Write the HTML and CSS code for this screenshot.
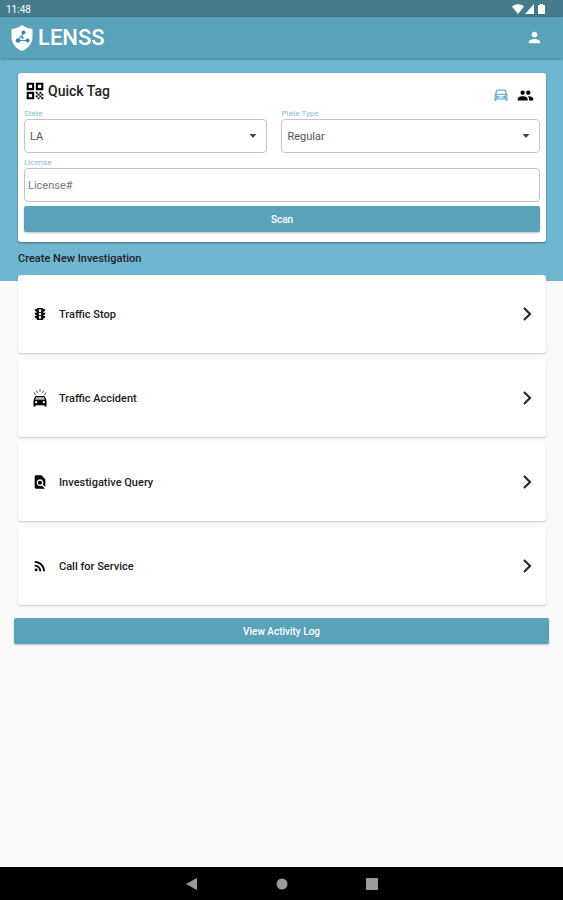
FILE: index.html
```html
<!DOCTYPE html>
<html lang="en">
<head>
  <meta charset="UTF-8" />
  <meta name="viewport" content="width=device-width, initial-scale=1.0" />
  <title>LENSS</title>
  <link rel="stylesheet" href="styles.css">
</head>
<body>
  <div class="status-bar">
    <span>11:48</span>
    <div class="status-icons">
      <svg width="12" height="10" viewBox="0 0 12 10"><path d="M0 2.5C3.500-.5 8.500-.5 12 2.500L6 10z" /></svg>
      <svg width="9" height="10" viewBox="0 0 9 10"><path d="M9 0v10H0z" /></svg>
      <svg class="battery" width="7" height="10" viewBox="0 0 7 10"><path d="M2 0h3v1h1.500l.5.5v8l-.5.5h-6L0 9.500v-8L.5 1H2z" /></svg>
    </div>
  </div>

  <header class="app-bar">
    <a class="brand" href="#">
      <svg width="22" height="26" viewBox="0 0 22 26">
        <path fill="#fff" d="M11 0c3 2.500 6.500 3.500 10.500 4v8c0 6.500-4.500 11.500-10.500 14C5 23.500.5 18.500.5 12V4C4.500 3.500 8 2.500 11 0z" />
        <path fill="none" stroke="#4a91ab" stroke-width="1.200" d="M12.500 8L7 15.500h9.500" />
        <g fill="#3c86a3">
          <circle cx="12.500" cy="7.500" r="2" />
          <circle cx="7" cy="15.500" r="2.300" />
          <circle cx="16.500" cy="15.500" r="2" />
          <circle cx="11.500" cy="12.500" r="1.200" />
        </g>
      </svg>
      <span>LENSS</span>
    </a>
    <button class="icon-button" type="button" aria-label="Profile">
      <svg width="17" height="17" viewBox="0 0 24 24"><path d="M12 12c2.210 0 4-1.790 4-4s-1.790-4-4-4-4 1.790-4 4 1.790 4 4 4zm0 2c-2.670 0-8 1.340-8 4v2h16v-2c0-2.660-5.330-4-8-4z" /></svg>
    </button>
  </header>

  <main>
    <section class="hero">
      <form class="quick-tag">
        <div class="quick-head">
          <h1>
            <svg width="20" height="20" viewBox="0 0 24 24"><path d="M2 11h9V2H2v9zm2.500-6.500h4v4h-4v-4zM2 22h9v-9H2v9zm2.500-6.500h4v4h-4v-4zM13 2v9h9V2h-9zm6.500 6.500h-4v-4h4v4zM19.500 19.500H22V22h-2.500zM13 13h2.200v2.200H13zM15.200 15.200h2.200v2.200h-2.200zM13 17.400h2.200v2.200H13zM15.200 19.700h2.200V22h-2.200zM17.400 17.400h2.200v2.200h-2.200zM17.400 13h2.200v2.200h-2.200zM19.600 15.200H22v2.200h-2.400z" /></svg>
            Quick Tag
          </h1>
          <div class="modes">
            <button class="icon-button active" type="button" aria-label="Vehicle">
              <svg width="14" height="14" viewBox="0 0 14 14"><path fill-rule="evenodd" d="M3 1.500h8c.5 0 .9.300 1 .8L13 6l.5.5v6c0 .3-.2.500-.5.500h-1c-.3 0-.5-.2-.5-.5v-1h-9v1c0 .3-.2.500-.5.500H1c-.3 0-.5-.2-.5-.5v-6L1 6l1-3.700c.1-.5.500-.8 1-.8zM3.300 2.800L2.500 5.700h9l-.8-2.900H3.300zM1.800 7v3.300h10.400V7H1.800z" /><path d="M2 7l3 1.500h4L12 7v3H9.500L9 9.300H5L4.500 10H2z" /></svg>
            </button>
            <button class="icon-button" type="button" aria-label="People">
              <svg width="17" height="17" viewBox="0 0 24 24"><path d="M16 11c1.660 0 2.990-1.340 2.990-3S17.660 5 16 5s-3 1.340-3 3 1.340 3 3 3zm-8 0c1.660 0 2.990-1.340 2.990-3S9.660 5 8 5 5 6.340 5 8s1.340 3 3 3zm0 2c-2.330 0-7 1.170-7 3.500V19h14v-2.500c0-2.330-4.670-3.500-7-3.500zm8 0c-.29 0-.62.02-.97.05 1.160.84 1.970 1.970 1.970 3.450V19h6v-2.500c0-2.330-4.670-3.500-7-3.500z" /></svg>
            </button>
          </div>
        </div>

        <div class="field-row">
          <div class="field">
            <label for="state">State</label>
            <div class="select-box">
              <select id="state">
                <option>LA</option>
              </select>
              <svg width="8" height="4" viewBox="0 0 8 4"><path d="M.5 0h7L4 4z" /></svg>
            </div>
          </div>
          <div class="field">
            <label for="plateType">Plate Type</label>
            <div class="select-box">
              <select id="plateType">
                <option>Regular</option>
              </select>
              <svg width="8" height="4" viewBox="0 0 8 4"><path d="M.5 0h7L4 4z" /></svg>
            </div>
          </div>
        </div>

        <div class="field">
          <label for="license">License</label>
          <input type="text" id="license" placeholder="License#" />
        </div>

        <button class="primary" type="submit">Scan</button>
      </form>

      <h2>Create New Investigation</h2>
    </section>

    <nav class="investigations">
      <a class="item" href="#">
        <svg width="16" height="16" viewBox="0 0 24 24"><path d="M20 10h-3V8.860c1.720-.45 3-2 3-3.860h-3V4c0-.55-.45-1-1-1H8c-.55 0-1 .45-1 1v1H4c0 1.860 1.280 3.410 3 3.860V10H4c0 1.860 1.280 3.410 3 3.860V15H4c0 1.860 1.280 3.410 3 3.860V20c0 .55.45 1 1 1h8c.55 0 1-.45 1-1v-1.140c1.720-.45 3-2 3-3.860h-3v-1.140c1.720-.45 3-2 3-3.860zm-8 9c-1.110 0-2-.9-2-2s.89-2 2-2c1.100 0 2 .9 2 2s-.89 2-2 2zm0-5c-1.110 0-2-.9-2-2s.89-2 2-2c1.100 0 2 .9 2 2s-.89 2-2 2zm0-5c-1.110 0-2-.9-2-2 0-1.110.89-2 2-2 1.100 0 2 .89 2 2 0 1.100-.89 2-2 2z" /></svg>
        <span>Traffic Stop</span>
        <svg class="chevron" width="10" height="14" viewBox="0 0 10 14"><path d="M2 1l6 6-6 6" /></svg>
      </a>
      <a class="item" href="#">
        <svg width="16" height="18" viewBox="0 0 16 18"><path d="M13.200 8c-.2-.6-.6-1-1.200-1H4c-.6 0-1 .4-1.200 1L1.500 11.500V17c0 .3.200.6.600.6h.9c.4 0 .6-.3.600-.6v-.8h8.800v.8c0 .3.200.6.600.6h.9c.4 0 .6-.3.600-.6v-5.500L13.200 8zM4.200 8h7.600l.8 2.500H3.400L4.200 8zM4.200 14.300a1.100 1.100 0 1 1 0-2.200 1.100 1.100 0 0 1 0 2.200zm7.600 0a1.100 1.100 0 1 1 0-2.200 1.100 1.100 0 0 1 0 2.200z" /><path fill="#aaa" d="M4.200 8h7.600l.8 2.500H3.400z" /><path fill="none" stroke="#555" d="M8 0v3M4.500 1.500l1 2.500M11.500 1.500l-1 2.500M2 3.500L3.500 6M14 3.500L12.500 6" /></svg>
        <span>Traffic Accident</span>
        <svg class="chevron" width="10" height="14" viewBox="0 0 10 14"><path d="M2 1l6 6-6 6" /></svg>
      </a>
      <a class="item" href="#">
        <svg width="16" height="16" viewBox="0 0 24 24"><path d="M20 19.590V8l-6-6H6c-1.100 0-1.990.9-1.990 2L4 20c0 1.100.89 2 1.990 2H18c.45 0 .85-.15 1.190-.4l-4.430-4.430c-.8.520-1.740.830-2.760.83-2.760 0-5-2.240-5-5s2.240-5 5-5 5 2.240 5 5c0 1.020-.31 1.960-.83 2.750L20 19.590zM9 13c0 1.660 1.340 3 3 3s3-1.340 3-3-1.340-3-3-3-3 1.340-3 3z" /></svg>
        <span>Investigative Query</span>
        <svg class="chevron" width="10" height="14" viewBox="0 0 10 14"><path d="M2 1l6 6-6 6" /></svg>
      </a>
      <a class="item" href="#">
        <svg width="16" height="16" viewBox="0 0 24 24"><circle cx="6.180" cy="17.820" r="2.180" /><path d="M4 4.440v2.830c7.030 0 12.730 5.700 12.730 12.730h2.830c0-8.590-6.970-15.560-15.560-15.560zm0 5.660v2.830c3.900 0 7.070 3.170 7.070 7.070h2.830c0-5.470-4.430-9.900-9.900-9.900z" /></svg>
        <span>Call for Service</span>
        <svg class="chevron" width="10" height="14" viewBox="0 0 10 14"><path d="M2 1l6 6-6 6" /></svg>
      </a>
    </nav>

    <div class="log">
      <button class="primary" type="button">View Activity Log</button>
    </div>
  </main>

  <footer class="system-nav">
    <button type="button" aria-label="Back"><svg width="12" height="12" viewBox="0 0 12 12"><path d="M11 0v12L0 6z" /></svg></button>
    <button type="button" aria-label="Home"><svg width="12" height="12" viewBox="0 0 12 12"><circle cx="6" cy="6" r="5.500" /></svg></button>
    <button type="button" aria-label="Overview"><svg width="12" height="12" viewBox="0 0 12 12"><rect width="12" height="12" rx="1" /></svg></button>
  </footer>
</body>
</html>
```

FILE: styles.css
```css
* {
  box-sizing: border-box;
}
body {
  font-family: Roboto, Arial, sans-serif;
  font-size: 11px;
  color: #222;
  background-color: #fafafa;
  display: flex;
  flex-direction: column;
  min-height: 100vh;
  margin: 0;
}
svg {
  display: block;
  flex: none;
}
button, input, select {
  font-family: inherit;
  margin: 0;
}
a {
  color: inherit;
  text-decoration: none;
}
.status-bar {
  display: flex;
  align-items: center;
  justify-content: space-between;
  height: 17px;
  padding: 1px 18px 0 6px;
  background: #457b8d;
  color: white;
  font-size: 10px;
}
.status-icons {
  display: flex;
  gap: 1px;
  fill: white;
}
.battery {
  margin-left: 3px;
}
.app-bar {
  display: flex;
  align-items: center;
  justify-content: space-between;
  height: 41px;
  padding: 0 20px 0 11px;
  background: #5aa1ba;
  box-shadow: 0 1px 3px rgba(0, 0, 0, 0.35);
  z-index: 1;
}
.brand {
  display: flex;
  align-items: center;
  gap: 5px;
  color: white;
  font-size: 22px;
  font-weight: 500;
}
.icon-button {
  padding: 0;
  border: none;
  background: none;
  fill: black;
  cursor: pointer;
}
.app-bar .icon-button {
  fill: white;
}
main {
  flex: 1;
}
.hero {
  padding: 15px 17px 14px 18px;
  background: #6fb6d0;
}
.quick-tag {
  padding: 0 6px 10px;
  background: white;
  border-radius: 3px;
  box-shadow: 0 1px 2px rgba(0, 0, 0, 0.4);
}
.quick-head {
  display: flex;
  justify-content: space-between;
  height: 36px;
  padding: 0 6px 0 1px;
}
h1 {
  display: flex;
  align-items: center;
  gap: 3px;
  margin: 0;
  font-size: 14px;
  font-weight: 500;
}
.modes {
  display: flex;
  align-items: center;
  gap: 9px;
  padding-top: 8px;
}
.icon-button.active {
  fill: #68b4d2;
}
.field-row {
  display: grid;
  grid-template-columns: 243fr 258fr;
  gap: 14px;
  margin-bottom: 5px;
}
label {
  display: block;
  font-size: 8px;
  line-height: 10px;
  color: #7fbdd3;
}
.select-box {
  position: relative;
}
.select-box svg {
  position: absolute;
  top: 15px;
  right: 10px;
  fill: #444;
  pointer-events: none;
}
select, input {
  display: block;
  width: 100%;
  height: 34px;
  padding: 0 5px;
  border: 1px solid #c4c4c4;
  border-radius: 4px;
  background: white;
  color: #555;
  font-size: 11px;
  appearance: none;
}
input {
  padding: 0 3px;
}
input::placeholder {
  color: #777;
}
.primary {
  display: block;
  width: 100%;
  height: 26px;
  padding: 0;
  border: none;
  border-radius: 2px;
  background: #5aa1ba;
  box-shadow: 0 1px 2px rgba(0, 0, 0, 0.25);
  color: white;
  font-size: 10px;
  font-weight: 500;
  cursor: pointer;
}
.quick-tag .primary {
  margin-top: 4px;
}
h2 {
  margin: 9px 0 0;
  font-size: 11px;
  line-height: 16px;
  font-weight: 500;
}
.investigations {
  display: flex;
  flex-direction: column;
  gap: 6px;
  margin: -6px 17px 0 18px;
}
.item {
  display: flex;
  align-items: center;
  gap: 11px;
  height: 78px;
  padding: 0 14px;
  background: white;
  border-radius: 3px;
  box-shadow: 0 1px 2px rgba(0, 0, 0, 0.2);
  font-weight: 500;
}
.chevron {
  margin-left: auto;
  fill: none;
  stroke: #222;
  stroke-width: 2;
}
.log {
  padding: 13px 14px;
}
.system-nav {
  display: flex;
  align-items: center;
  justify-content: center;
  gap: 78px;
  height: 33px;
  background: black;
}
.system-nav button {
  padding: 0;
  border: none;
  background: none;
  fill: #9a9a9a;
}
```
